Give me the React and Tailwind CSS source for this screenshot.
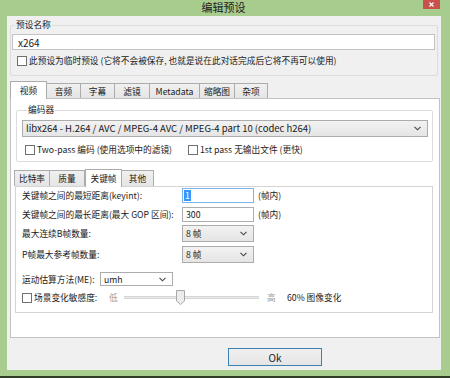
import React from 'react';

const Chevron = () => (
  <svg width="7" height="5" viewBox="0 0 7 5" className="shrink-0">
    <polyline points="0.5,0.8 3.5,3.8 6.5,0.8" fill="none" stroke="#444" strokeWidth="1.1" />
  </svg>
);

const Check = ({ className = '' }) => (
  <span className={`inline-block w-[10px] h-[10px] border border-[#707070] bg-white shrink-0 ${className}`} />
);

const Select = ({ value, className = '' }) => (
  <div className={`flex items-center justify-between border border-[#acacac] bg-gradient-to-b from-[#f2f2f2] to-[#e5e5e5] pl-[3px] pr-[6px] ${className}`}>
    <span>{value}</span>
    <Chevron />
  </div>
);

const Tab = ({ label, active, w, h }) => (
  <div
    className={
      active
        ? `relative z-10 -mb-px flex items-center justify-center border border-b-0 border-[#acacac] bg-white ${w} ${h}`
        : `flex items-center justify-center border border-b-0 border-[#acacac] bg-gradient-to-b from-[#f0f0f0] to-[#e5e5e5] -ml-px ${w} ${h}`
    }
  >
    {label}
  </div>
);

export default function App() {
  const mainTabs = [
    ['视频', 'w-[37px]'],
    ['音频', 'w-[35px]'],
    ['字幕', 'w-[35px]'],
    ['滤镜', 'w-[36px]'],
    ['Metadata', 'w-[51px]'],
    ['缩略图', 'w-[36px]'],
    ['杂项', 'w-[34px]'],
  ];
  const subTabs = [
    ['比特率', 'w-[36px]'],
    ['质量', 'w-[36px]'],
    ['关键帧', 'w-[37px]'],
    ['其他', 'w-[33px]'],
  ];

  return (
    <div className="w-[450px] h-[378px] flex flex-col bg-[#a8cb8e] text-[8.7px] leading-[11px] whitespace-nowrap text-[#1a1a1a] font-['Noto_Sans_CJK_SC','Noto_Sans',sans-serif] overflow-hidden">
      {/* title bar */}
      <div className="h-[16px] flex items-start shrink-0">
        <div className="flex-1 text-center text-[11px] leading-[15px] text-[#222] pl-[24px]">编辑预设</div>
        <div className="w-[17px] h-[9px] bg-[#c9514c] flex items-center justify-center mr-[10px]">
          <svg width="5" height="5" viewBox="0 0 5 5">
            <path d="M0.5 0.5 L4.5 4.5 M4.5 0.5 L0.5 4.5" stroke="#fff" strokeWidth="1.1" />
          </svg>
        </div>
      </div>

      <div className="flex h-[354px] shrink-0">
        <div className="w-[7px]" />
        <div className="w-[434px] bg-[#f0f0f0] flex flex-col">
          {/* preset name */}
          <fieldset className="mt-[4px] mx-[3px] border border-[#dcdcdc] rounded-[2px] pl-[1px] pr-[2px] pb-[9px]">
            <legend className="ml-[3px] px-[1px] leading-[10px]">预设名称</legend>
            <div className="mt-[4px] h-[16px] border border-[#c4c4c4] bg-white pl-[5px] flex items-center text-[10px]">x264</div>
            <div className="mt-[6px] flex items-center gap-[2px] ml-[5px] h-[10px]">
              <Check />
              <span className="leading-[10px]">此预设为临时预设 (它将不会被保存, 也就是说在此对话完成后它将不再可以使用)</span>
            </div>
          </fieldset>

          {/* main tabs */}
          <div className="mt-[5px] ml-[3px] flex items-end h-[17px]">
            {mainTabs.map(([t, w], i) => (
              <Tab key={t} label={t} w={w} active={i === 0} h={i === 0 ? 'h-[18px]' : 'h-[15px]'} />
            ))}
          </div>
          <div className="ml-[3px] mr-[1px] h-[240px] border border-[#c3c3c3] bg-white flex flex-col">
            <fieldset className="mt-[6px] ml-[5px] mr-[6px] border border-[#dcdcdc] rounded-[2px] pl-[5px] pr-[4px] pb-[6px]">
              <legend className="ml-[5px] px-[1px] leading-[10px]">编码器</legend>
              <Select className="mt-[5px] h-[17px] text-[9.5px]" value="libx264 - H.264 / AVC / MPEG-4 AVC / MPEG-4 part 10 (codec h264)" />
              <div className="mt-[8px] flex items-center h-[10px] ml-[3px]">
                <Check />
                <span className="ml-[2px] w-[151px] leading-[10px]">Two-pass 编码 (使用选项中的滤镜)</span>
                <Check />
                <span className="ml-[2px] leading-[10px]">1st pass 无输出文件 (更快)</span>
              </div>
            </fieldset>

            {/* sub tabs */}
            <div className="mt-[7px] ml-[4px] flex items-end h-[17px]">
              {subTabs.map(([t, w], i) => (
                <Tab key={t} label={t} w={w} active={i === 2} h={i === 2 ? 'h-[18px]' : 'h-[16px]'} />
              ))}
            </div>
            <div className="ml-[4px] mr-[6px] h-[127px] border border-[#d4d4d4] bg-white pl-[6px] pt-[1px] flex flex-col">
              <div className="flex items-center h-[15px]">
                <span className="w-[160px]">关键帧之间的最短距离(keyint):</span>
                <div className="w-[72px] h-[15px] border border-[#7eb4ea] bg-white flex items-center pl-[1px]">
                  <span className="bg-[#3399ff] text-white px-[1px] leading-[11px]">1</span>
                </div>
                <span className="ml-[4px]">(帧内)</span>
              </div>
              <div className="mt-[4px] flex items-center h-[15px]">
                <span className="w-[160px]">关键帧之间的最长距离(最大 GOP 区间):</span>
                <div className="w-[72px] h-[15px] border border-[#abadb3] bg-white flex items-center pl-[3px]">300</div>
                <span className="ml-[4px]">(帧内)</span>
              </div>
              <div className="mt-[3px] flex items-center h-[17px]">
                <span className="w-[160px]">最大连续B帧数量:</span>
                <Select className="w-[72px] h-[17px]" value="8 帧" />
              </div>
              <div className="mt-[4px] flex items-center h-[17px]">
                <span className="w-[160px]">P帧最大参考帧数量:</span>
                <Select className="w-[72px] h-[17px]" value="8 帧" />
              </div>
              <div className="mt-[9px] flex items-center h-[14px]">
                <span className="w-[78px]">运动估算方法(ME):</span>
                <div className="w-[73px] h-[14px] border border-[#acacac] bg-white flex items-center justify-between pl-[3px] pr-[6px]">
                  <span>umh</span>
                  <Chevron />
                </div>
              </div>
              <div className="mt-[4px] flex items-center h-[15px]">
                <Check className="w-[9px] h-[9px]" />
                <span className="ml-[2px] w-[75px]">场景变化敏感度:</span>
                <span className="text-[#a0a0a0] w-[15px]">低</span>
                <div className="w-[135px] h-[15px] flex items-center">
                  <div className="w-[52px] h-[3px] bg-[#e7eaea] border-y border-[#d6d6d6]" />
                  <svg width="9" height="15" viewBox="0 0 9 15" className="shrink-0">
                    <path d="M0.5 0.5 H8.5 V11 L4.5 14.5 L0.5 11 Z" fill="#ececec" stroke="#a8a8a8" />
                  </svg>
                  <div className="flex-1 h-[3px] bg-[#e7eaea] border-y border-[#d6d6d6]" />
                </div>
                <span className="ml-[8px] text-[#a0a0a0] w-[20px]">高</span>
                <span>60% 图像变化</span>
              </div>
            </div>
          </div>

          <div className="mt-[10px] ml-[221px] w-[94px] h-[18px] border border-[#3c7fb1] bg-gradient-to-b from-[#f0f0f0] to-[#e5e5e5] flex items-center justify-center text-[10px]">
            Ok
          </div>
        </div>
        <div className="w-[9px]" />
      </div>

      <div className="h-[6px] shrink-0" />
      <div className="h-[2px] bg-[#2f3d26] shrink-0" />
    </div>
  );
}
